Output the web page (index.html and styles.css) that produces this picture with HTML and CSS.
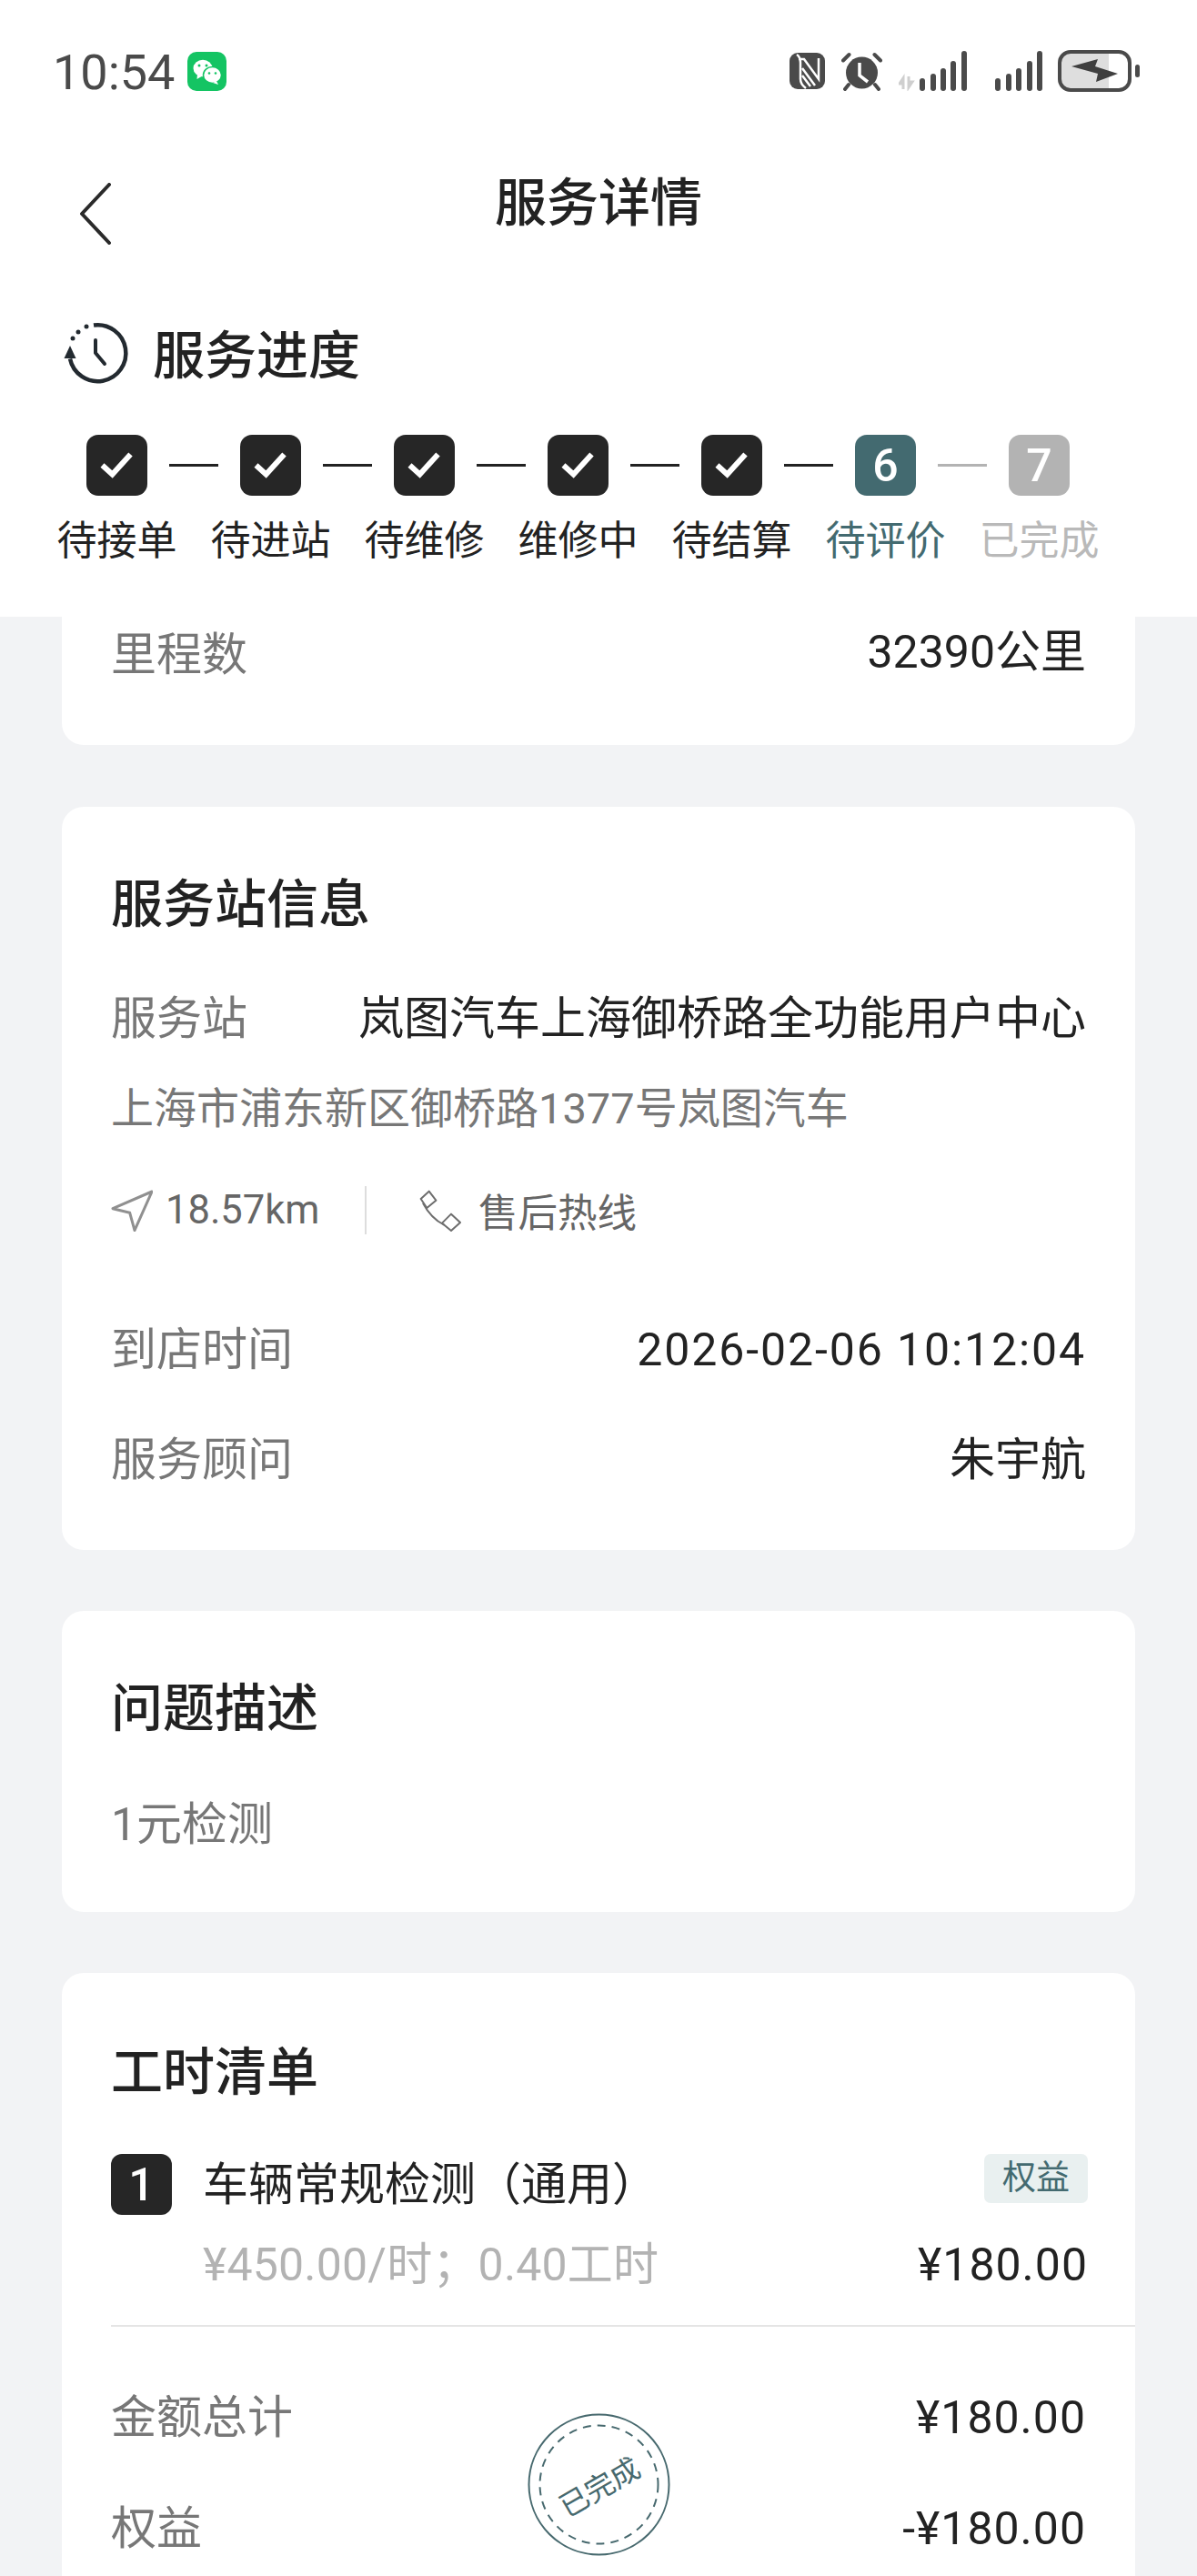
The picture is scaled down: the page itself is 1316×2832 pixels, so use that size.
FILE: index.html
```html
<!DOCTYPE html>
<html lang="zh-CN">
<head>
  <meta charset="UTF-8">
  <meta name="viewport" content="width=device-width, initial-scale=1.0">
  <title>服务详情</title>
  <link rel="stylesheet" href="styles.css">
</head>
<body>
  <div class="page">
    <header class="top">
      <!-- status bar -->
      <div class="status">
        <div class="status-left">
          <span class="time">10:54</span>
          <svg class="wechat" viewBox="0 0 43 43">
            <rect width="43" height="43" rx="10" fill="#14c463"/>
            <ellipse cx="17" cy="18" rx="10.500" ry="9.300" fill="#fff"/>
            <path d="M11 24l-.5 6 6-3.500z" fill="#fff"/>
            <ellipse cx="27.500" cy="25.500" rx="10" ry="9" fill="#fff" stroke="#14c463" stroke-width="1.500"/>
            <path d="M32 32l2 4-6-2z" fill="#fff"/>
            <circle cx="13" cy="15" r="1.500" fill="#14c463"/><circle cx="21" cy="15" r="1.500" fill="#14c463"/>
            <circle cx="24" cy="23.500" r="1.300" fill="#14c463"/><circle cx="31" cy="23.500" r="1.300" fill="#14c463"/>
          </svg>
        </div>
        <div class="status-right">
          <svg class="ic-nfc" viewBox="0 0 39 40">
            <rect width="39" height="40" rx="9" fill="#4a4a4a"/>
            <path d="M8 2c3 2 4 5 4 9v18c0 4 2 7 6 10" fill="none" stroke="#fff" stroke-width="2.500"/>
            <path d="M10 7h6l16 22V6" fill="none" stroke="#fff" stroke-width="2.500"/>
            <path d="M14 17l14 19M14 25l9 12" fill="none" stroke="#fff" stroke-width="2.500"/>
          </svg>
          <svg class="ic-alarm" viewBox="0 0 45 43">
            <circle cx="22.500" cy="23" r="17.500" fill="#4a4a4a"/>
            <path d="M2 9.500L8.500 3M43 9.500L36.500 3M8 36l-4 5M37 36l4 5" stroke="#4a4a4a" stroke-width="4" stroke-linecap="round"/>
            <path d="M20 12v14l9 7" fill="none" stroke="#fff" stroke-width="3.500"/>
          </svg>
          <svg class="ic-signal-a" viewBox="0 0 78 44">
            <path d="M5 42V30l-4 6h4M11 28v12l4-6h-4" fill="none" stroke="#cfcfcf" stroke-width="3"/>
            <rect x="23" y="30" width="6" height="14" rx="3" fill="#4a4a4a"/>
            <rect x="35" y="25" width="6" height="19" rx="3" fill="#4a4a4a"/>
            <rect x="46" y="19" width="6" height="25" rx="3" fill="#4a4a4a"/>
            <rect x="57" y="11" width="6" height="33" rx="3" fill="#4a4a4a"/>
            <rect x="69" y="0" width="6" height="44" rx="3" fill="#4a4a4a"/>
          </svg>
          <svg class="ic-signal-b" viewBox="0 0 53 44">
            <rect x="0" y="30" width="6" height="14" rx="3" fill="#4a4a4a"/>
            <rect x="12" y="25" width="6" height="19" rx="3" fill="#4a4a4a"/>
            <rect x="23" y="19" width="6" height="25" rx="3" fill="#4a4a4a"/>
            <rect x="35" y="11" width="6" height="33" rx="3" fill="#4a4a4a"/>
            <rect x="46" y="0" width="6" height="44" rx="3" fill="#4a4a4a"/>
          </svg>
          <svg class="ic-battery" viewBox="0 0 90 46">
            <path d="M14 2h42v42H14a12 12 0 0 1-12-12V14A12 12 0 0 1 14 2z" fill="#dedede"/>
            <rect x="2" y="2" width="77" height="42" rx="12" fill="none" stroke="#4a4a4a" stroke-width="4"/>
            <rect x="85" y="16" width="5" height="14" rx="2.500" fill="#4a4a4a"/>
            <path d="M15 18l29-8-3 8 25 8-24 9 2-9z" fill="#3f3f3f"/>
          </svg>
        </div>
      </div>

      <div class="navbar">
        <svg class="back" viewBox="0 0 36 68"><path d="M33 2L3 34l30 32" fill="none" stroke="#2a2a2a" stroke-width="4" stroke-linecap="round" stroke-linejoin="round"/></svg>
        <h1>服务详情</h1>
      </div>

      <div class="progress-title">
        <svg class="history" viewBox="0 0 90 85">
          <path d="M43 12.500a31 31 0 1 1-26 37" fill="none" stroke="#232a30" stroke-width="4.500"/>
          <path d="M17 35l6.500 14H10.500z" fill="#232a30"/>
          <circle cx="35" cy="14" r="2.500" fill="#232a30"/><circle cx="26" cy="20" r="2.500" fill="#232a30"/><circle cx="20" cy="27" r="2.500" fill="#232a30"/>
          <path d="M45 29v14l10 12" fill="none" stroke="#232a30" stroke-width="4" stroke-linecap="round" stroke-linejoin="round"/>
        </svg>
        <h2>服务进度</h2>
      </div>

      <div class="steps">
        <div class="step"><div class="step-top"><span class="box"><svg class="check" viewBox="0 0 67 67"><path d="M17.500 33.500l11 10 20-22" fill="none" stroke="#fff" stroke-width="6"/></svg></span></div><span class="step-name">待接单</span></div>
        <div class="step"><div class="step-top"><span class="box"><svg class="check" viewBox="0 0 67 67"><path d="M17.500 33.500l11 10 20-22" fill="none" stroke="#fff" stroke-width="6"/></svg></span></div><span class="step-name">待进站</span></div>
        <div class="step"><div class="step-top"><span class="box"><svg class="check" viewBox="0 0 67 67"><path d="M17.500 33.500l11 10 20-22" fill="none" stroke="#fff" stroke-width="6"/></svg></span></div><span class="step-name">待维修</span></div>
        <div class="step"><div class="step-top"><span class="box"><svg class="check" viewBox="0 0 67 67"><path d="M17.500 33.500l11 10 20-22" fill="none" stroke="#fff" stroke-width="6"/></svg></span></div><span class="step-name">维修中</span></div>
        <div class="step"><div class="step-top"><span class="box"><svg class="check" viewBox="0 0 67 67"><path d="M17.500 33.500l11 10 20-22" fill="none" stroke="#fff" stroke-width="6"/></svg></span></div><span class="step-name">待结算</span></div>
        <div class="step current"><div class="step-top"><span class="box">6</span></div><span class="step-name">待评价</span></div>
        <div class="step todo"><div class="step-top"><span class="box">7</span></div><span class="step-name">已完成</span></div>
      </div>
    </header>

    <main class="content">
      <section class="card card-cut">
        <div class="row row-mileage"><span class="label">里程数</span><span class="value">32390公里</span></div>
      </section>

      <section class="card card-station">
        <h3>服务站信息</h3>
        <div class="row row-station"><span class="label">服务站</span><span class="value">岚图汽车上海御桥路全功能用户中心</span></div>
        <p class="address">上海市浦东新区御桥路1377号岚图汽车</p>
        <div class="links">
          <span class="link link-nav">
            <svg class="ic-nav" viewBox="0 0 46 46"><path d="M45 2L2 20.700l18.700 4.600L26 44.700z" fill="none" stroke="#909090" stroke-width="3" stroke-linejoin="round"/></svg>
            18.57km
          </span>
          <span class="link link-phone">
            <svg class="ic-phone" viewBox="30 20 138 138">
              <path d="M62 25l23 30-30 25-20-30zM135 100l30 28-30 27-30-25z" fill="none" stroke="#6e6e6e" stroke-width="6" stroke-linejoin="round"/>
              <path d="M42 64c16 30 38 56 70 72" fill="none" stroke="#6e6e6e" stroke-width="6"/>
            </svg>
            售后热线
          </span>
        </div>
        <div class="row row-arrive"><span class="label">到店时间</span><span class="value date">2026-02-06 10:12:04</span></div>
        <div class="row row-advisor"><span class="label">服务顾问</span><span class="value">朱宇航</span></div>
      </section>

      <section class="card card-problem">
        <h3>问题描述</h3>
        <p class="problem">1元检测</p>
      </section>

      <section class="card card-labor">
        <h3>工时清单</h3>
        <div class="labor-item">
          <span class="num">1</span>
          <div class="labor-main">
            <div class="labor-line"><span class="labor-name">车辆常规检测（通用）</span><span class="tag">权益</span></div>
            <div class="labor-line labor-line-b"><span class="labor-rate">¥450.00/时；0.40工时</span><span class="labor-price">¥180.00</span></div>
          </div>
        </div>
        <div class="row row-total"><span class="label">金额总计</span><span class="value money">¥180.00</span></div>
        <div class="row row-benefit"><span class="label">权益</span><span class="value money">-¥180.00</span></div>
        <div class="stamp">
          <svg class="stamp-ring" viewBox="0 0 157 157">
            <circle cx="78.500" cy="78.500" r="77" fill="none" stroke="#47696e" stroke-width="2"/>
            <circle cx="78.500" cy="78.500" r="65" fill="none" stroke="#47696e" stroke-width="2" stroke-dasharray="9 7"/>
          </svg>
          <span class="stamp-text">已完成</span>
        </div>
      </section>
    </main>
  </div>
</body>
</html>
```

FILE: styles.css
```css
* {
  box-sizing: border-box;
}
html, body {
  margin: 0;
  padding: 0;
}
body {
  font-family: Roboto, "Noto Sans CJK SC", sans-serif;
  color: #222;
  background: #f2f3f5;
}
.page {
  height: 2832px;
  overflow: hidden;
}
h1, h2, h3, p {
  margin: 0;
}

/* header */
.top {
  height: 678px;
  padding-top: 55px;
  background: #fff;
}
.status {
  display: flex;
  justify-content: space-between;
  align-items: center;
  height: 46px;
  padding: 0 63px 0 58px;
}
.status-left {
  display: flex;
  align-items: center;
  gap: 14px;
}
.time {
  font-size: 54px;
  line-height: 50px;
  padding-top: 4px;
  color: #4a4a4a;
}
.wechat {
  width: 43px;
  height: 43px;
}
.status-right {
  display: flex;
  align-items: center;
}
.ic-nfc {
  width: 39px;
  height: 40px;
  margin-right: 18px;
}
.ic-alarm {
  width: 45px;
  height: 43px;
  margin-right: 18px;
}
.ic-signal-a {
  width: 78px;
  height: 44px;
  margin-right: 28px;
}
.ic-signal-b {
  width: 53px;
  height: 44px;
  margin-right: 16px;
}
.ic-battery {
  width: 90px;
  height: 46px;
}
.navbar {
  position: relative;
  height: 66px;
  margin-top: 100px;
  padding-left: 87px;
}
.back {
  display: block;
  width: 36px;
  height: 68px;
}
.navbar h1 {
  position: absolute;
  top: -10px;
  left: 0;
  width: 100%;
  font-size: 57px;
  line-height: 66px;
  font-weight: 500;
  text-align: center;
}
.progress-title {
  display: flex;
  align-items: center;
  gap: 18px;
  height: 85px;
  margin-top: 78px;
  padding-left: 60px;
}
.history {
  width: 90px;
  height: 85px;
}
.progress-title h2 {
  font-size: 57px;
  font-weight: 500;
  margin-top: -3px;
}

/* steps */
.steps {
  display: flex;
  margin-top: 48px;
  padding-left: 44px;
}
.step {
  width: 169px;
  display: flex;
  flex-direction: column;
  align-items: center;
}
.step-top {
  position: relative;
  height: 67px;
}
.step:not(:last-child) .step-top::after {
  content: "";
  position: absolute;
  left: 91px;
  top: 32px;
  width: 54px;
  height: 3px;
  background: #222;
}
.step.current .step-top::after {
  background: #b3b3b3;
}
.box {
  display: flex;
  align-items: center;
  justify-content: center;
  width: 67px;
  height: 67px;
  border-radius: 13px;
  background: #262626;
  color: #fff;
  font-size: 50px;
  font-weight: 500;
}
.check {
  width: 67px;
  height: 67px;
}
.step-name {
  margin-top: 17px;
  font-size: 44px;
  line-height: 66px;
  white-space: nowrap;
}
.current .box {
  background: #436a70;
}
.current .step-name {
  color: #436a70;
}
.todo .box {
  background: #b3b3b3;
}
.todo .step-name {
  color: #b9b9b9;
}

/* cards */
.content {
  padding: 0 68px;
}
.card {
  position: relative;
  margin-bottom: 67px;
  padding: 0 54px;
  background: #fff;
  border-radius: 24px;
}
.card-cut {
  height: 141px;
  margin-bottom: 68px;
  border-radius: 0 0 24px 24px;
}
.card h3 {
  font-size: 57px;
  font-weight: 500;
  line-height: 70px;
}
.row {
  display: flex;
  justify-content: space-between;
  align-items: center;
  height: 70px;
  font-size: 50px;
  line-height: 70px;
}
.label {
  color: #777;
}
.value {
  color: #222;
}
.date {
  letter-spacing: 1.9px;
}
.money {
  letter-spacing: 1px;
}
.row-mileage {
  padding-top: 7px;
}
.row-mileage .label {
  padding-top: 7px;
}
.card-station {
  height: 817px;
  padding-top: 73px;
}
.row-station {
  margin-top: 55px;
}
.address {
  margin-top: 29px;
  font-size: 47px;
  line-height: 70px;
  color: #777;
}
.links {
  display: flex;
  align-items: center;
  height: 53px;
  margin-top: 50px;
  font-size: 43.5px;
  color: #666;
}
.link {
  display: flex;
  align-items: center;
  gap: 14px;
}
.link-nav {
  width: 281px;
  height: 53px;
  border-right: 2px solid #ddd;
}
.link-phone {
  padding-left: 58px;
  gap: 19px;
}
.ic-nav {
  width: 46px;
  height: 46px;
}
.ic-phone {
  width: 46px;
  height: 46px;
}
.row-arrive {
  margin-top: 92px;
}
.row-advisor {
  margin-top: 51px;
}
.card-problem {
  height: 331px;
  padding-top: 73px;
}
.problem {
  margin-top: 57px;
  font-size: 50px;
  line-height: 70px;
  color: #777;
}
.card-labor {
  height: 900px;
  padding-top: 75px;
}
.labor-item {
  display: flex;
  gap: 34px;
  height: 190px;
  margin-top: 54px;
  margin-right: -54px;
  border-bottom: 2px solid #e5e5e5;
}
.num {
  flex: none;
  display: flex;
  align-items: center;
  justify-content: center;
  width: 67px;
  height: 67px;
  border-radius: 12px;
  background: #262626;
  color: #fff;
  font-size: 50px;
  font-weight: 500;
}
.labor-main {
  flex: 1;
  padding-right: 52px;
}
.labor-line {
  display: flex;
  justify-content: space-between;
  align-items: flex-start;
  height: 54px;
}
.labor-line-b {
  margin-top: 33px;
  height: 70px;
  line-height: 70px;
}
.labor-name {
  font-size: 50px;
  line-height: 68px;
  white-space: nowrap;
}
.tag {
  width: 114px;
  height: 54px;
  border-radius: 7px;
  background: #e9f0f0;
  color: #436a70;
  font-size: 37px;
  line-height: 54px;
  text-align: center;
}
.labor-rate {
  font-size: 50px;
  letter-spacing: 0.2px;
  color: #b3b3b3;
}
.labor-price {
  font-size: 50px;
  letter-spacing: 1px;
}
.row-total {
  margin-top: 65px;
}
.row-benefit {
  margin-top: 52px;
}

/* stamp sits over the summary rows */
.stamp {
  position: absolute;
  left: 512px;
  top: 484px;
  display: flex;
  align-items: center;
  justify-content: center;
  width: 157px;
  height: 157px;
}
.stamp-ring {
  position: absolute;
  inset: 0;
  width: 157px;
  height: 157px;
}
.stamp-text {
  transform: rotate(-30deg);
  font-size: 32px;
  color: #47696e;
}
```
